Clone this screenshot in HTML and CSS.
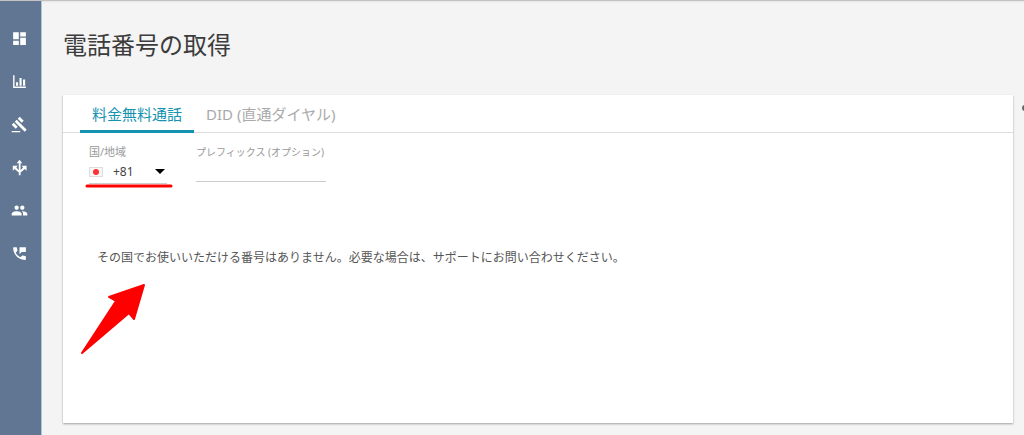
FILE: index.html
```html
<!DOCTYPE html>
<html lang="ja">
<head>
<meta charset="utf-8">
<meta name="viewport" content="width=device-width, initial-scale=1">
<title>電話番号の取得</title>
<link rel="stylesheet" href="styles.css">
</head>
<body>
<div class="app">
  <nav class="sidebar" aria-label="メインメニュー">
    <a class="nav-link" href="#dashboard" aria-label="ダッシュボード"><svg class="icon" viewBox="0 0 24 24"><path d="M3 13h8V3H3v10zm0 8h8v-6H3v6zm10 0h8V11h-8v10zm0-18v6h8V3h-8z"/></svg></a>
    <a class="nav-link" href="#reports" aria-label="レポート"><svg class="icon" viewBox="0 0 24 24"><path d="M3 3h2v16h16v2H3zM7 13h3v5H7zM12 7h3v11h-3zM17 9h3v9h-3z"/></svg></a>
    <a class="nav-link" href="#rules" aria-label="ルール"><svg class="icon" viewBox="0 0 24 24"><path d="M1 21h12v2H1zM5.245 8.07l2.83-2.827 14.14 14.142-2.828 2.828zM12.317 1l5.657 5.656-2.83 2.83-5.654-5.66zM3.825 9.485l5.657 5.657-2.828 2.828-5.657-5.657z"/></svg></a>
    <a class="nav-link" href="#routing" aria-label="ルーティング"><svg class="icon" viewBox="0 0 24 24"><path d="M12 1 8 6h3v10L7.500 12 9.500 9.500H2.500V16.500L5 14l6 5v4h2.500v-4l6-5 2.500 2.500V9.500H15l2 2.500-3.500 4V6H16z"/></svg></a>
    <a class="nav-link" href="#users" aria-label="ユーザー"><svg class="icon" viewBox="0 0 24 24"><path d="M16 11c1.660 0 2.990-1.340 2.990-3S17.660 5 16 5s-3 1.340-3 3 1.340 3 3 3zm-8 0c1.660 0 2.990-1.340 2.990-3S9.660 5 8 5 5 6.340 5 8s1.340 3 3 3zm0 2c-2.330 0-7 1.170-7 3.500V19h14v-2.500C15 14.170 10.330 13 8 13zm8 0c-.29 0-.62.02-.97.05 1.160.84 1.970 1.970 1.970 3.450V19h6v-2.500c0-2.330-4.670-3.500-7-3.500z"/></svg></a>
    <a class="nav-link" href="#numbers" aria-label="電話番号"><svg class="icon" viewBox="0 0 24 24"><path d="M20 15.500c-1.250 0-2.450-.2-3.570-.57a1 1 0 0 0-1.020.24l-2.200 2.200a15.070 15.070 0 0 1-6.590-6.580l2.200-2.210c.28-.27.36-.66.25-1.010A11.360 11.360 0 0 1 8.500 4c0-.55-.45-1-1-1H4c-.55 0-1 .45-1 1 0 9.390 7.610 17 17 17 .55 0 1-.45 1-1v-3.500c0-.55-.45-1-1-1zM12 3v10l3-3h6V3z"/></svg></a>
  </nav>
  <main class="main">
    <h1 class="title">電話番号の取得</h1>
    <section class="card">
      <div class="tabs" role="tablist">
        <button class="tab tab-active" type="button" role="tab" aria-selected="true">料金無料通話</button>
        <button class="tab" type="button" role="tab" aria-selected="false">DID (直通ダイヤル)</button>
      </div>
      <form class="filters">
        <div class="field field-country">
          <label class="label" for="country">国/地域</label>
          <div class="country">
            <svg class="flag" viewBox="0 0 14 10" aria-hidden="true"><path fill="#dedede" d="M0 0h14v10H0z"/><path fill="#f7f7f7" d="M1 1h12v8H1z"/><circle cx="7" cy="5" r="3" fill="#f33"/></svg>
            <select class="select" id="country"><option>+81</option></select>
            <svg class="caret" viewBox="0 0 10 5" aria-hidden="true"><path d="M0 0h10L5 5z"/></svg>
          </div>
          <svg class="underline-mark" viewBox="0 0 88 4" aria-hidden="true"><path d="M2 2h84"/></svg>
        </div>
        <div class="field field-prefix">
          <label class="label label-small" for="prefix">プレフィックス (オプション)</label>
          <input class="input" id="prefix" type="text">
        </div>
      </form>
      <div class="result">
        <p class="message">その国でお使いいただける番号はありません。必要な場合は、サポートにお問い合わせください。</p>
        <svg class="arrow" viewBox="0 0 66 74" aria-hidden="true"><path d="M2 71 36 19 29 15 64 3 54 37 49 31z"/></svg>
      </div>
    </section>
    <span class="edge-dot"></span>
  </main>
</div>
</body>
</html>
```
FILE: styles.css
```css
* {
  box-sizing: border-box;
}

body {
  margin: 0;
  background: #f4f4f4;
  color: #555;
  font-family: "Noto Sans", "Noto Sans CJK JP", sans-serif;
  font-size: 12px;
}

.app {
  display: flex;
  min-height: 100vh;
  border-top: 1px solid rgba(0, 0, 0, 0.2);
  background: linear-gradient(rgba(0, 0, 0, 0.06), transparent 2px);
}

.sidebar {
  flex: none;
  width: 42px;
  padding-top: 16px;
  background: #607693;
  border-right: 1px solid #b4c4d8;
}

.nav-link {
  display: flex;
  align-items: center;
  justify-content: center;
  height: 43px;
  padding-right: 2px;
}

.icon {
  width: 17px;
  height: 17px;
  fill: #fff;
}

.main {
  position: relative;
  display: flex;
  flex: 1;
  flex-direction: column;
  min-width: 0;
  padding: 24px 11px 12px 21px;
  overflow: hidden;
}

.title {
  margin: 0 0 30px;
  color: #3c3c3c;
  font-size: 24px;
  font-weight: 400;
  line-height: 40px;
}

.card {
  flex: 1;
  background: #fff;
  box-shadow: 0 1px 2px rgba(0, 0, 0, 0.35);
}

.tabs {
  display: flex;
  height: 38px;
  padding-left: 17px;
  border-bottom: 1px solid #ddd;
}

.tab {
  height: 38px;
  padding: 3px 12px 0;
  border: 0;
  border-bottom: 3px solid transparent;
  background: none;
  color: #aaa;
  font: inherit;
  font-size: 15px;
  line-height: 32px;
  white-space: nowrap;
}

.tab-active {
  border-color: #1592b0;
  color: #1592b0;
}

.filters {
  display: flex;
  gap: 29px;
  padding: 11px 26px 0;
}

.field {
  position: relative;
}

.field-country {
  width: 78px;
}

.field-prefix {
  width: 130px;
}

.label {
  display: block;
  color: #999;
  font-size: 11px;
  line-height: 16px;
  white-space: nowrap;
}

.label-small {
  font-size: 10px;
}

.country {
  display: flex;
  align-items: center;
  height: 24px;
  padding-right: 2px;
  border-bottom: 1px solid #ccc;
}

.flag {
  flex: none;
  width: 14px;
  height: 10px;
}

.select {
  flex: 1;
  min-width: 0;
  padding: 0 0 0 10px;
  border: 0;
  appearance: none;
  background: none;
  color: #444;
  font: inherit;
}

.caret {
  flex: none;
  width: 10px;
  height: 5px;
}

.input {
  width: 100%;
  height: 22px;
  padding: 0;
  border: 0;
  border-bottom: 1px solid #ccc;
  background: none;
  font: inherit;
}

.underline-mark {
  position: absolute;
  top: 40px;
  left: -4px;
  width: 88px;
  height: 4px;
  fill: none;
  stroke: #f00;
  stroke-width: 3;
  stroke-linecap: round;
}

.result {
  position: relative;
  padding: 64px 34px 0;
}

.message {
  margin: 0;
  line-height: 20px;
}

.arrow {
  position: absolute;
  top: 98px;
  left: 17px;
  width: 66px;
  height: 74px;
  fill: #f00;
  stroke: #f00;
  stroke-width: 2;
  stroke-linejoin: round;
}

.edge-dot {
  position: absolute;
  top: 104px;
  right: -4px;
  width: 6px;
  height: 6px;
  border-radius: 50%;
  background: #666;
}
```
